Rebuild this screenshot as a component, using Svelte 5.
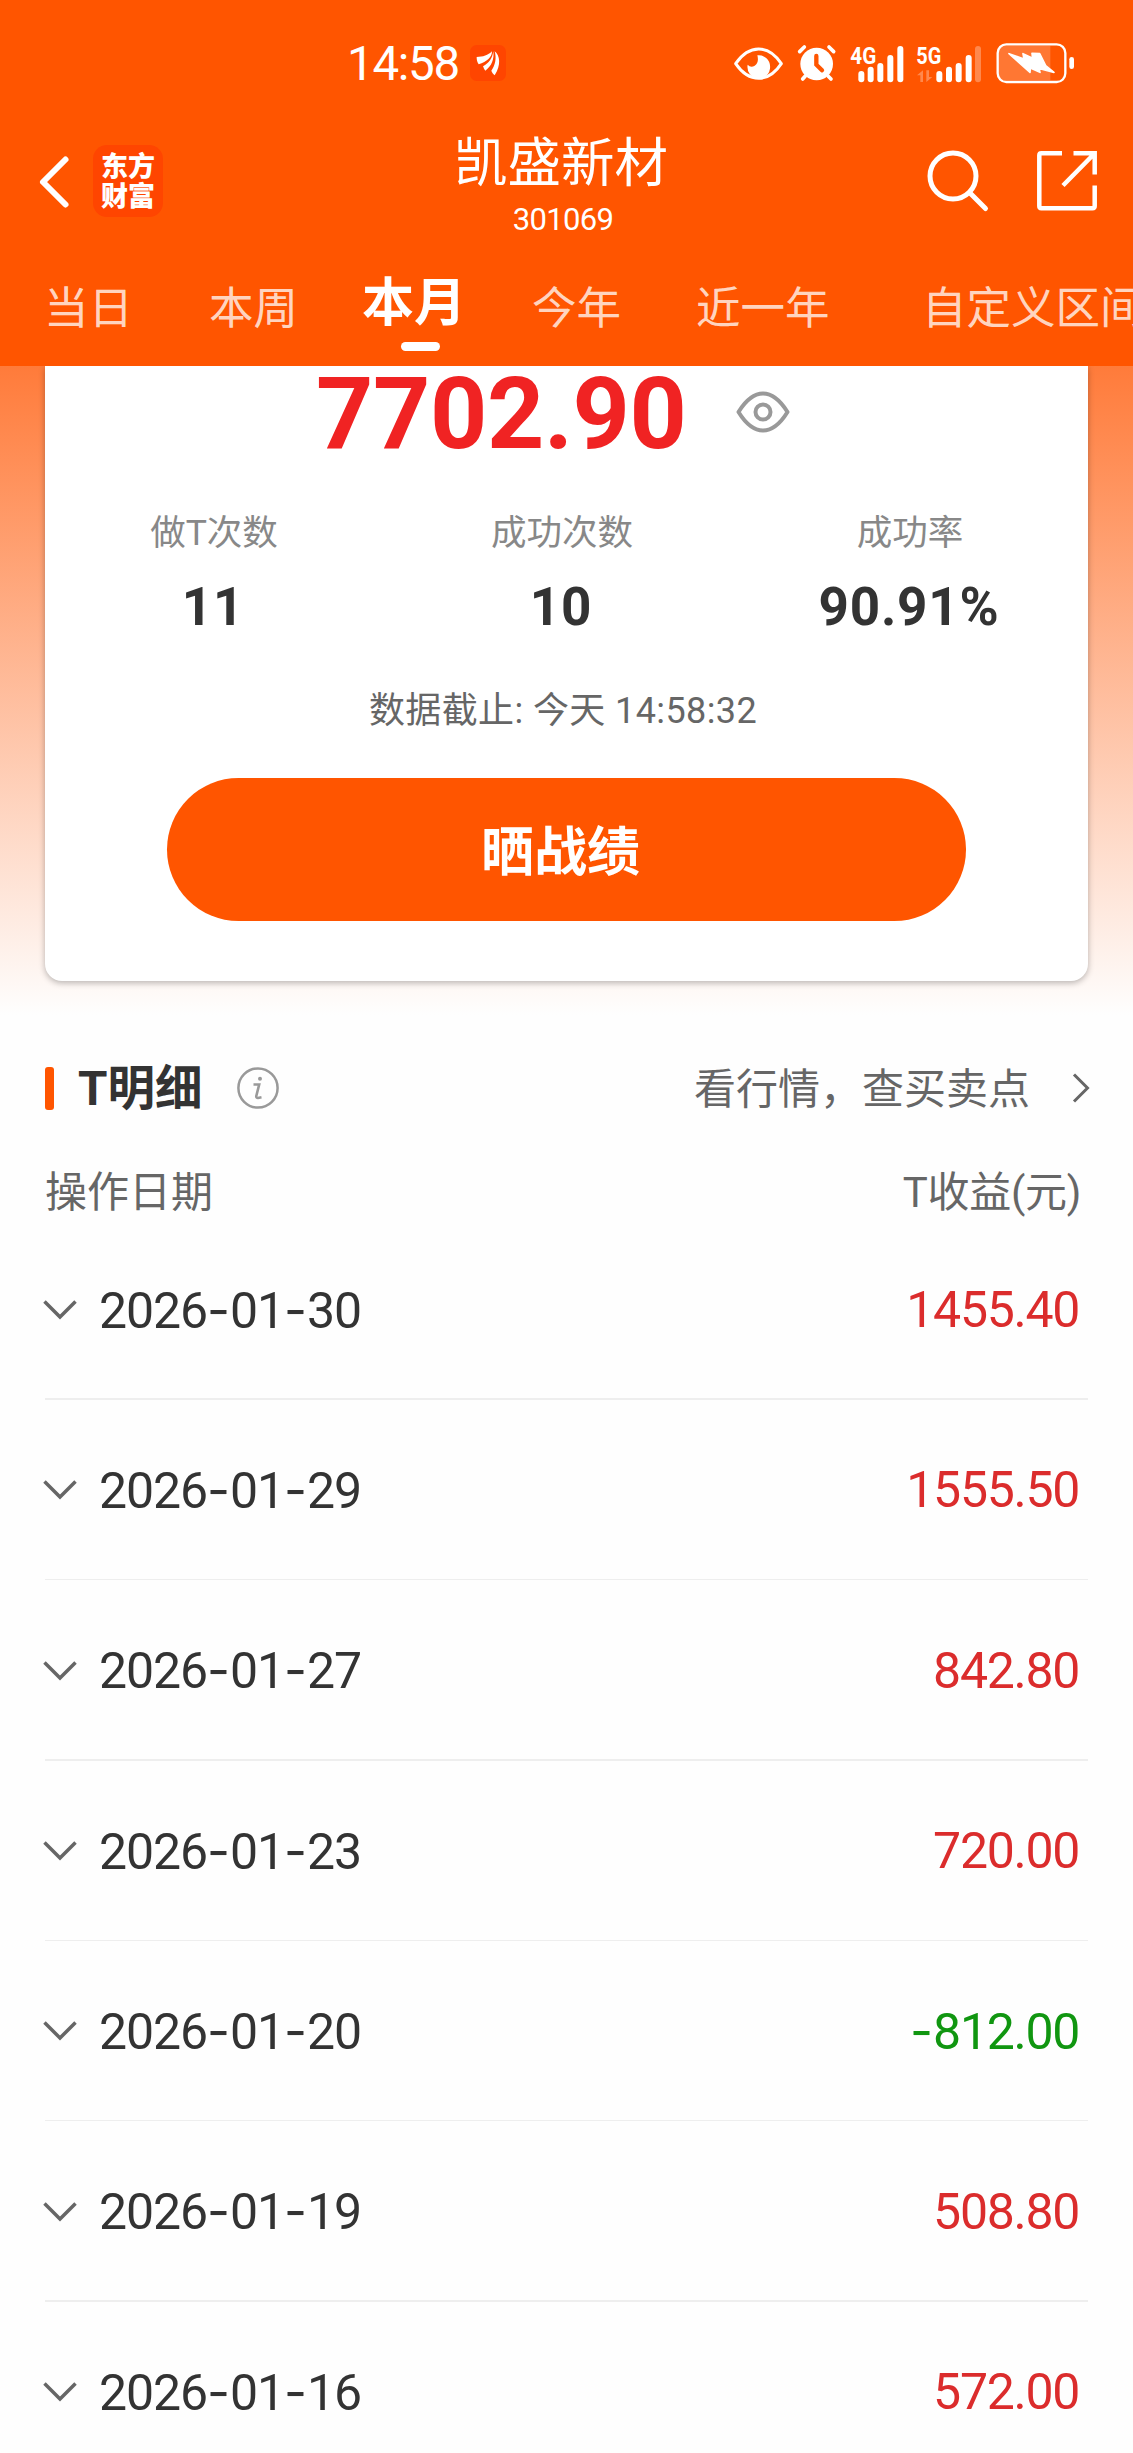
<script lang="ts">
  const tabs = [
    { label: '当日', width: 165 },
    { label: '本周', width: 153 },
    { label: '本月', width: 170 },
    { label: '今年', width: 164 },
    { label: '近一年', width: 226 },
    { label: '自定义区间', width: 230 }
  ];

  const stats = [
    { label: '做T次数', value: '11' },
    { label: '成功次数', value: '10' },
    { label: '成功率', value: '90.91%' }
  ];

  const records = [
    { date: '2026-01-30', profit: '1455.40' },
    { date: '2026-01-29', profit: '1555.50' },
    { date: '2026-01-27', profit: '842.80' },
    { date: '2026-01-23', profit: '720.00' },
    { date: '2026-01-20', profit: '-812.00' },
    { date: '2026-01-19', profit: '508.80' },
    { date: '2026-01-16', profit: '572.00' }
  ];

  let activeTab = $state('本月');
</script>

<!-- the dash is set in a wider face than the digits -->
{#snippet dashed(text: string)}
  {#each text.split('-') as part, i}{#if i > 0}<span class="dash">-</span>{/if}{part}{/each}
{/snippet}

<div class="page">
  <header class="header">
    <div class="status-bar">
      <span class="time">14:58</span>
      <svg class="app-badge" width="36" height="36" viewBox="0 0 108 108">
        <rect width="108" height="108" rx="20" fill="#ff4500" />
        <g fill="#fff">
          <path d="M20 36C39 36 54 31 66 19C66 37 51 50 26 58C21 51 20 44 20 36Z" />
          <path d="M70 19C73 43 65 64 46 77C42 73 41 68 39 64C57 54 67 41 70 19Z" />
          <path d="M74 19C90 31 94 61 74 91C69 87 66 82 64 77C76 60 80 40 74 19Z" />
        </g>
      </svg>

      <div class="status-icons">
        <svg class="s-eye" width="49" height="33" viewBox="42 76 147 99">
          <path d="M47 126Q77 82 116 82Q155 82 184 126Q155 170 116 170Q77 170 47 126Z" fill="none" stroke="#fff" stroke-width="9" stroke-linejoin="round" />
          <path d="M112 101A34 35 0 1 1 83 129Q92 139 104 132Q118 122 112 101Z" fill="#fff" />
        </svg>
        <svg class="s-alarm" width="39" height="38" viewBox="231 69 117 114">
          <g fill="none" stroke="#fff" stroke-width="11" stroke-linecap="round">
            <path d="M239 92L253 78M341 92L327 78M256 165L248 174M324 165L333 174" />
          </g>
          <circle cx="290" cy="129" r="49" fill="#fff" />
          <path d="M289 105V131L306 148" fill="none" stroke="#f50" stroke-width="13" stroke-linecap="round" />
        </svg>
        <svg class="s-4g" width="54" height="39" viewBox="389 66 162 117">
          <text class="net" x="390" y="125" textLength="78" lengthAdjust="spacingAndGlyphs">4G</text>
          <g fill="#fff">
            <rect x="414" y="147" width="18" height="34" rx="9" />
            <rect x="442" y="134" width="18" height="47" rx="9" />
            <rect x="471" y="123" width="18" height="58" rx="9" />
            <rect x="501" y="99" width="18" height="82" rx="9" />
            <rect x="531" y="72" width="18" height="109" rx="9" />
          </g>
        </svg>
        <svg class="s-5g" width="66" height="39" viewBox="589 66 198 117">
          <text class="net" x="590" y="125" textLength="75" lengthAdjust="spacingAndGlyphs">5G</text>
          <g fill="#fff">
            <path d="M592 160L610 145V180H602V160ZM638 165L620 180V145H628V165Z" opacity=".3" />
            <rect x="650" y="147" width="18" height="34" rx="9" />
            <rect x="679" y="134" width="18" height="47" rx="9" />
            <rect x="708" y="123" width="18" height="58" rx="9" />
            <rect x="738" y="99" width="18" height="82" rx="9" />
            <rect x="766" y="72" width="18" height="109" rx="9" opacity=".3" />
          </g>
        </svg>
        <svg class="s-battery" width="79" height="40" viewBox="827 66 237 120">
          <path d="M852 74H990V178H852Q834 178 834 160V92Q834 74 852 74Z" fill="#fff" opacity=".2" />
          <rect x="832" y="70" width="203" height="113" rx="26" fill="none" stroke="#fff" stroke-width="7" />
          <rect x="1047" y="108" width="14" height="36" rx="7" fill="#fff" />
          <path d="M866 98L911 114L908 98L937 112L935 97L958 98L976 134L1001 154L956 142L959 154L930 141L929 154Z" fill="#fff" stroke="#fff" stroke-width="5" stroke-linejoin="round" />
        </svg>
      </div>
    </div>

    <nav class="nav">
      <svg class="back" width="30" height="54" viewBox="0 0 30 54">
        <path d="M26.500 4.500L4 27L26.500 49.500" fill="none" stroke="#fff" stroke-width="6" stroke-linecap="round" stroke-linejoin="round" />
      </svg>
      <div class="brand"><span>东方</span><span>财富</span></div>
      <div class="title">
        <h1>凯盛新材</h1>
        <span class="code">301069</span>
      </div>
      <svg class="search" width="62" height="62" viewBox="0 0 62 62">
        <g fill="none" stroke="#fff" stroke-width="5" stroke-linecap="round">
          <circle cx="26" cy="26" r="23" />
          <path d="M43 43L58.500 58.500" />
        </g>
      </svg>
      <svg class="share" width="60" height="60" viewBox="0 0 60 60">
        <g fill="none" stroke="#fff" stroke-width="4.500" stroke-linejoin="round">
          <path d="M25 2.300H4.300Q2.300 2.300 2.300 4.300V55Q2.300 57.200 4.300 57.200H55.500Q57.700 57.200 57.700 55V34.500" />
          <path d="M36.500 2.300H57.700V23.500M57 3L26 34.500" stroke-linejoin="miter" />
        </g>
      </svg>
    </nav>

    <div class="tabs">
      {#each tabs as tab}
        <button
          class="tab"
          class:active={tab.label === activeTab}
          style="width: {tab.width}px"
          onclick={() => (activeTab = tab.label)}
        >
          {tab.label}
        </button>
      {/each}
    </div>
  </header>

  <section class="hero">
    <div class="card">
      <div class="total">
        <span class="amount">7702.90</span>
        <svg width="54" height="42" viewBox="0 0 54 42">
          <g fill="none" stroke="#999" stroke-width="4">
            <path d="M2.500 21Q14 2.500 27 2.500Q40 2.500 51.500 21Q40 39.500 27 39.500Q14 39.500 2.500 21Z" stroke-linejoin="round" />
            <circle cx="27" cy="21" r="7.500" />
          </g>
        </svg>
      </div>
      <div class="stats">
        {#each stats as stat}
          <div class="stat">
            <span class="stat-label">{stat.label}</span>
            <span class="stat-value">{stat.value}</span>
          </div>
        {/each}
      </div>
      <p class="deadline">数据截止: 今天 14:58:32</p>
      <button class="show-btn">晒战绩</button>
    </div>
  </section>

  <section class="detail">
    <div class="detail-head">
      <span class="mark"></span>
      <h2>T明细</h2>
      <svg class="info" width="42" height="42" viewBox="0 0 42 42">
        <circle cx="21" cy="21" r="19.600" fill="none" stroke="#999" stroke-width="2.500" />
        <circle cx="23" cy="11.800" r="2" fill="#999" />
        <path d="M16.500 17.500H22.200L19.300 29Q19 31 21 31L24.500 30.300" fill="none" stroke="#999" stroke-width="2.600" />
      </svg>
      <span class="quote-link">看行情，查买卖点</span>
      <svg class="arrow" width="18" height="30" viewBox="0 0 18 30">
        <path d="M2 1.500L15.500 15L2 28.500" fill="none" stroke="#666" stroke-width="3" />
      </svg>
    </div>

    <div class="columns">
      <span>操作日期</span>
      <span class="profit-col">T收益(元)</span>
    </div>

    {#each records as record}
      <div class="record">
        <svg width="34" height="20" viewBox="0 0 34 20">
          <path d="M1.500 1.500L17 17L32.500 1.500" fill="none" stroke="#666" stroke-width="3.500" />
        </svg>
        <span class="date">{@render dashed(record.date)}</span>
        <span class="profit" class:loss={record.profit.startsWith('-')}>{@render dashed(record.profit)}</span>
      </div>
      <div class="divider"></div>
    {/each}
  </section>
</div>

<style>
  :global(body) {
    margin: 0;
    background: #fff;
  }

  .page {
    width: 1133px;
    height: 2453px;
    overflow: hidden;
    background: #fefefe;
    font-family: Roboto, 'Noto Sans CJK SC', sans-serif;
    color: #333;
  }

  button {
    border: none;
    padding: 0;
    background: none;
    font-family: inherit;
    text-align: left;
  }

  h1,
  h2,
  p {
    margin: 0;
  }

  svg {
    display: block;
    flex-shrink: 0;
    overflow: visible;
  }

  .header {
    height: 366px;
    background: #ff5500;
    color: #fff;
  }

  /* status bar */
  .status-bar {
    display: flex;
    align-items: center;
    height: 126px;
    padding-left: 347px;
  }

  .time {
    width: 123px;
    padding-top: 2px;
    font-size: 47.5px;
    font-weight: 400;
    letter-spacing: -1.3px;
    line-height: 60px;
  }

  .status-icons {
    display: flex;
    align-items: center;
    margin-left: 228px;
  }

  .s-alarm {
    margin-left: 14px;
  }

  .s-4g {
    margin-left: 14px;
  }

  .s-5g {
    margin-left: 12px;
  }

  .s-battery {
    margin-left: 14px;
  }

  .net {
    font-size: 74px;
    font-weight: 700;
    fill: #fff;
  }

  /* navigation */
  .nav {
    display: flex;
    align-items: center;
    height: 110px;
    padding: 0 36px 0 39px;
  }

  .back {
    margin-top: 1px;
  }

  .brand {
    box-sizing: border-box;
    display: flex;
    flex-direction: column;
    justify-content: center;
    align-items: center;
    width: 70px;
    height: 72px;
    margin-left: 24px;
    padding-top: 2px;
    border-radius: 14px;
    background: #ff4500;
    font-size: 27px;
    font-weight: 900;
    line-height: 30px;
  }

  .title {
    display: flex;
    flex-direction: column;
    align-items: center;
    width: 300px;
    margin-left: 248px;
    padding-top: 10px;
  }

  h1 {
    font-size: 53.5px;
    font-weight: 400;
    line-height: 64px;
  }

  .code {
    font-size: 31px;
    line-height: 40px;
    letter-spacing: -0.7px;
    margin: 4px 0 0 4px;
  }

  .search {
    margin-left: 216px;
  }

  .share {
    margin-left: 48px;
  }

  .tabs {
    display: flex;
    height: 130px;
    padding-left: 44px;
    overflow: hidden;
  }

  .tab {
    flex-shrink: 0;
    display: flex;
    flex-direction: column;
    height: 130px;
    padding-top: 43px;
    color: rgba(255, 255, 255, 0.77);
    font-size: 44.5px;
    line-height: 60px;
    white-space: nowrap;
  }

  .tab.active {
    padding-top: 38px;
    color: #fff;
    font-size: 52px;
    font-weight: 700;
  }

  .tab.active::after {
    content: '';
    width: 39px;
    height: 9px;
    margin: 8px 0 0 39px;
    border-radius: 5px;
    background: #fff;
  }

  /* summary card */
  .hero {
    height: 649px;
    padding: 0 45px;
    background: linear-gradient(#ff7b3a, #fefefe);
    clip-path: inset(0);
  }

  .card {
    box-sizing: border-box;
    height: 615px;
    padding-top: 1px;
    border-radius: 0 0 17px 17px;
    background: #fff;
    box-shadow: 0 2px 6px rgba(0, 0, 0, 0.28);
  }

  .total {
    display: flex;
    align-items: center;
    height: 90px;
    padding-left: 271px;
  }

  .amount {
    width: 420px;
    padding-top: 3px;
    color: #f02323;
    font-size: 100px;
    font-weight: 700;
    letter-spacing: -0.4px;
    line-height: 87px;
  }

  .stats {
    display: grid;
    grid-template-columns: repeat(3, 348px);
    margin: 51px 0 0 -5px;
  }

  .stat {
    display: flex;
    flex-direction: column;
    align-items: center;
  }

  .stat-label {
    color: #888;
    font-size: 35.5px;
    line-height: 50px;
  }

  .stat-value {
    font-size: 53px;
    font-weight: 700;
    letter-spacing: 0.8px;
    line-height: 60px;
    margin: 19px 2px 0 0;
  }

  .deadline {
    margin: 49px 7px 0 0;
    color: #666;
    font-size: 36px;
    letter-spacing: 0.4px;
    line-height: 50px;
    text-align: center;
  }

  .show-btn {
    display: block;
    width: 799px;
    height: 143px;
    margin: 42px auto 0;
    padding: 0 12px 3px 0;
    border-radius: 72px;
    background: #ff5500;
    color: #fff;
    font-size: 53px;
    font-weight: 700;
    text-align: center;
  }

  /* detail list */
  .detail {
    padding: 0 45px;
  }

  .detail-head {
    display: flex;
    align-items: center;
    height: 60px;
    padding-top: 43px;
  }

  .mark {
    width: 9px;
    height: 43px;
    border-radius: 3px;
    background: #ff5500;
  }

  h2 {
    width: 159px;
    margin-left: 24px;
    padding-top: 2px;
    font-size: 47.5px;
    font-weight: 700;
    line-height: 60px;
  }

  .quote-link {
    margin-left: auto;
    padding-top: 3px;
    color: #666;
    font-size: 42px;
    line-height: 60px;
  }

  .arrow {
    margin: 0 -2px 0 42px;
  }

  .columns {
    display: flex;
    justify-content: space-between;
    height: 101.64px;
    padding-right: 7px;
    color: #666;
    font-size: 42px;
    line-height: 149px;
  }

  .profit-col {
    letter-spacing: -0.3px;
  }

  .record {
    display: flex;
    align-items: center;
    height: 178.85px;
    font-size: 50px;
    line-height: 70px;
  }

  .record svg {
    margin: 2px 0 0 -2px;
  }

  .date {
    margin-left: 22px;
    padding-top: 2px;
    letter-spacing: -1.1px;
  }

  .dash {
    font-family: Inter, sans-serif;
    letter-spacing: 0;
  }

  .profit {
    margin-left: auto;
    padding: 2px 9px 0 0;
    color: #db2c2c;
    letter-spacing: -1.3px;
  }

  .profit.loss {
    color: #109610;
  }

  .divider {
    height: 1.51px;
    background: #eee;
  }
</style>
